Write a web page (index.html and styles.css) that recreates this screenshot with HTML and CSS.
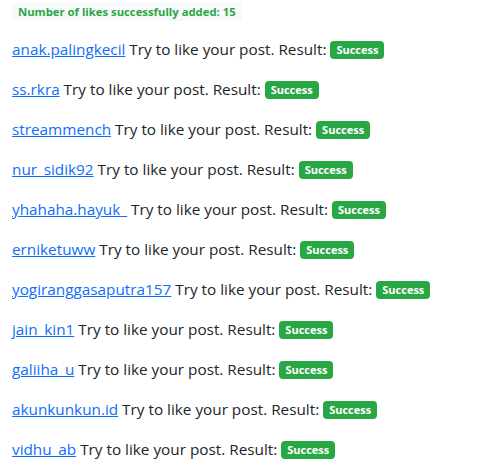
FILE: index.html
```html
<!DOCTYPE html>
<html lang="en">

<head>
    <meta charset="UTF-8">
    <meta name="viewport" content="width=device-width, initial-scale=1.0">
    <title>Like Results</title>
    <link rel="stylesheet" href="styles.css">
</head>

<body>
    <div class="summary"><span class="total">Number of likes successfully added: 15</span></div>

    <p><a href="#">anak.palingkecil</a> Try to like your post. Result: <span class="badge">Success</span></p>
    <p><a href="#">ss.rkra</a> Try to like your post. Result: <span class="badge">Success</span></p>
    <p><a href="#">streammench</a> Try to like your post. Result: <span class="badge">Success</span></p>
    <p><a href="#">nur_sidik92</a> Try to like your post. Result: <span class="badge">Success</span></p>
    <p><a href="#">yhahaha.hayuk_</a> Try to like your post. Result: <span class="badge">Success</span></p>
    <p><a href="#">erniketuww</a> Try to like your post. Result: <span class="badge">Success</span></p>
    <p><a href="#">yogiranggasaputra157</a> Try to like your post. Result: <span class="badge">Success</span></p>
    <p><a href="#">jain_kin1</a> Try to like your post. Result: <span class="badge">Success</span></p>
    <p><a href="#">galiiha_u</a> Try to like your post. Result: <span class="badge">Success</span></p>
    <p><a href="#">akunkunkun.id</a> Try to like your post. Result: <span class="badge">Success</span></p>
    <p><a href="#">vidhu_ab</a> Try to like your post. Result: <span class="badge">Success</span></p>
</body>

</html>
```

FILE: styles.css
```css
body {
    font-family: "Open Sans", Arial, sans-serif;
    font-size: 15.3px;
    color: #212529;
    background: #fff;
    margin: 0;
    padding: 0 12px;
}

.summary {
    margin-bottom: 16px;
}

.total {
    display: inline-block;
    background: #f8f9fa;
    color: #28a745;
    font-weight: bold;
    font-size: 11.3px;
    line-height: 19px;
    margin-top: 1px;
    padding: 0 6px;
    border-radius: 4px;
}

p {
    margin: 0 0 16px;
    line-height: 24px;
}

a {
    color: #0d6efd;
}

.badge {
    display: inline-block;
    background: #28a745;
    color: #fff;
    font-weight: bold;
    font-size: 11px;
    line-height: 12px;
    padding: 3px 6px;
    border-radius: 4px;
    vertical-align: 1px;
}
```
